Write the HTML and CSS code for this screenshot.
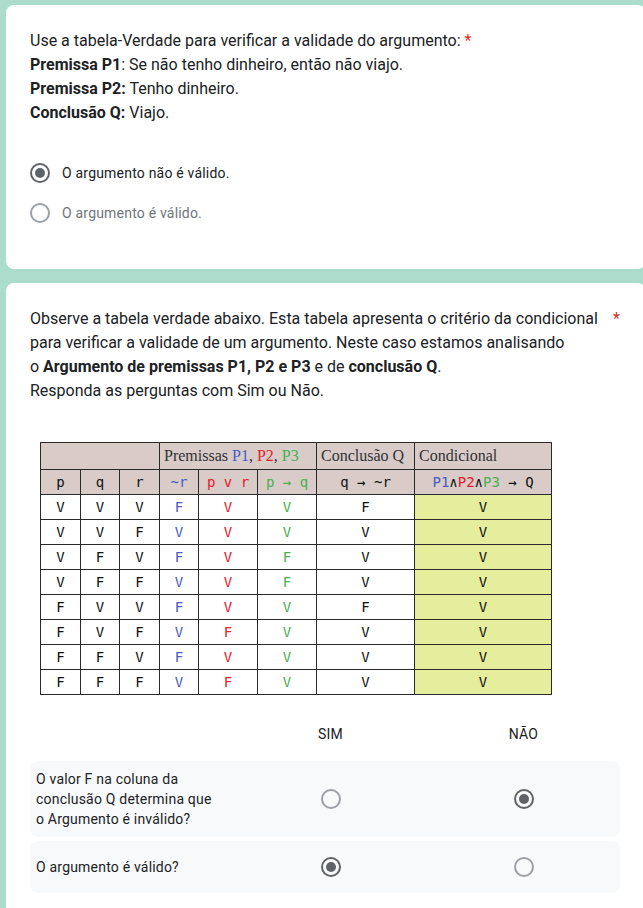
FILE: index.html
```html
<!DOCTYPE html>
<html lang="pt">
<head>
<meta charset="utf-8">
<title>Formulário</title>
<link rel="stylesheet" href="styles.css">
</head>
<body>
<main class="page">
  <section class="card card-first">
    <div class="q-title">Use a tabela-Verdade para verificar a validade do argumento: <span class="req">*</span><br><b>Premissa P1</b>: Se não tenho dinheiro, então não viajo.<br><b>Premissa P2:</b> Tenho dinheiro.<br><b>Conclusão Q:</b> Viajo.</div>
    <div class="options">
      <div class="option"><span class="radio on"></span><span class="opt-label">O argumento não é válido.</span></div>
      <div class="option muted"><span class="radio"></span><span class="opt-label">O argumento é válido.</span></div>
    </div>
  </section>

  <section class="card">
    <div class="q-head">
      <div class="q-title">Observe a tabela verdade abaixo. Esta tabela apresenta o critério da condicional<br>para verificar a validade de um argumento. Neste caso estamos analisando<br>o <b>Argumento de premissas P1, P2 e P3</b> e de <b>conclusão Q</b>.<br>Responda as perguntas com Sim ou Não.</div>
      <span class="req">*</span>
    </div>

    <table class="tt">
      <colgroup>
        <col class="w40"><col class="w39"><col class="w40"><col class="w39"><col class="w59"><col class="w59"><col class="w98"><col class="w137">
      </colgroup>
      <thead>
        <tr class="h1">
          <th colspan="3"></th>
          <th colspan="3" class="lft">Premissas <span class="cb">P1</span>, <span class="cr">P2</span>, <span class="cg">P3</span></th>
          <th class="lft">Conclusão Q</th>
          <th class="lft">Condicional</th>
        </tr>
        <tr class="h2">
          <th>p</th><th>q</th><th>r</th>
          <th class="cb">~r</th><th class="cr">p v r</th><th class="cg">p → q</th>
          <th>q → ~r</th>
          <th><span class="cb">P1</span>∧<span class="cr">P2</span>∧<span class="cg">P3</span> → Q</th>
        </tr>
      </thead>
      <tbody>
        <tr><td>V</td><td>V</td><td>V</td><td class="cb">F</td><td class="cr">V</td><td class="cg">V</td><td>F</td><td class="cond">V</td></tr>
        <tr><td>V</td><td>V</td><td>F</td><td class="cb">V</td><td class="cr">V</td><td class="cg">V</td><td>V</td><td class="cond">V</td></tr>
        <tr><td>V</td><td>F</td><td>V</td><td class="cb">F</td><td class="cr">V</td><td class="cg">F</td><td>V</td><td class="cond">V</td></tr>
        <tr><td>V</td><td>F</td><td>F</td><td class="cb">V</td><td class="cr">V</td><td class="cg">F</td><td>V</td><td class="cond">V</td></tr>
        <tr><td>F</td><td>V</td><td>V</td><td class="cb">F</td><td class="cr">V</td><td class="cg">V</td><td>F</td><td class="cond">V</td></tr>
        <tr><td>F</td><td>V</td><td>F</td><td class="cb">V</td><td class="cr">F</td><td class="cg">V</td><td>V</td><td class="cond">V</td></tr>
        <tr><td>F</td><td>F</td><td>V</td><td class="cb">F</td><td class="cr">V</td><td class="cg">V</td><td>V</td><td class="cond">V</td></tr>
        <tr><td>F</td><td>F</td><td>F</td><td class="cb">V</td><td class="cr">F</td><td class="cg">V</td><td>V</td><td class="cond">V</td></tr>
      </tbody>
    </table>

    <div class="grid">
      <div class="grid-head"><span></span><span class="col-h">SIM</span><span class="col-h">NÃO</span></div>
      <div class="grid-row">
        <div class="row-label">O valor F na coluna da<br>conclusão Q determina que<br>o Argumento é inválido?</div>
        <div class="cell"><span class="radio"></span></div>
        <div class="cell"><span class="radio on"></span></div>
      </div>
      <div class="grid-row">
        <div class="row-label">O argumento é válido?</div>
        <div class="cell"><span class="radio on"></span></div>
        <div class="cell"><span class="radio"></span></div>
      </div>
    </div>
  </section>
</main>
</body>
</html>
```
FILE: styles.css
```css
html, body {
  margin: 0;
  padding: 0;
  overflow: hidden;
  background: #acdccb;
}
body {
  font-family: Roboto, "Liberation Sans", Arial, sans-serif;
  color: #202124;
}
.page {
  padding: 5px 0 0 6px;
  width: 640px;
}
.card {
  background: #fff;
  border-radius: 8px;
  padding: 24px 24px 24px 24px;
  margin-bottom: 14px;
}
.card-first {
  padding-bottom: 36px;
}
.q-title {
  font-size: 16px;
  line-height: 24px;
  letter-spacing: 0;
}
.q-title b {
  font-weight: 700;
}
.req {
  color: #d93025;
  font-size: 16px;
  line-height: 24px;
}
.q-head {
  display: flex;
  justify-content: space-between;
  align-items: flex-start;
  padding-right: 2px;
}
.options {
  margin-top: 28px;
}
.option {
  display: flex;
  align-items: center;
  height: 40px;
}
.opt-label {
  font-size: 14px;
  letter-spacing: 0.2px;
  margin-left: 12px;
  color: #202124;
}
.option.muted .opt-label {
  color: #70757a;
}
.radio {
  box-sizing: border-box;
  width: 20px;
  height: 20px;
  border: 2px solid #9aa0a6;
  border-radius: 50%;
  display: inline-flex;
  align-items: center;
  justify-content: center;
  flex: none;
}
.radio.on {
  border-color: #5f6368;
}
.radio.on::after {
  content: "";
  width: 10px;
  height: 10px;
  border-radius: 50%;
  background: #5f6368;
}

/* truth table */
.tt {
  margin: 39px 0 0 10px;
  border-collapse: collapse;
  table-layout: fixed;
  width: 511px;
  font-family: "DejaVu Sans Mono", "Liberation Mono", monospace;
  font-size: 14px;
  color: #111;
}
.w40 { width: 40px; }
.w39 { width: 39px; }
.w59 { width: 59px; }
.w98 { width: 98px; }
.w137 { width: 137px; }
.tt th, .tt td {
  border: 1px solid #2a2a2a;
  padding: 0;
  text-align: center;
  font-weight: 400;
}
.tt thead th {
  background: #d8cbc8;
}
.tt tr.h1 {
  height: 27px;
}
.tt tr.h1 th {
  font-family: "Liberation Serif", "Times New Roman", serif;
  font-size: 16px;
  color: #333;
}
.tt th.lft {
  text-align: left;
  padding-left: 4px;
}
.tt tr.h2, .tt tbody tr {
  height: 25px;
}
.tt td.cond {
  background: #e5ee9c;
}
.cb { color: #4a5cc4; }
.cr { color: #e3202b; }
.cg { color: #4caf50; }

/* grid question */
.grid {
  width: 590px;
}
.grid-head, .grid-row {
  display: grid;
  grid-template-columns: 204px 193px 193px;
}
.grid-head {
  margin-top: 29px;
  height: 20px;
  line-height: 20px;
  margin-bottom: 17px;
}
.col-h {
  text-align: center;
  font-size: 14px;
  letter-spacing: 0.2px;
}
.grid-row {
  background: #f8f9fa;
  border-radius: 8px;
  min-height: 52px;
  align-items: center;
  margin-bottom: 4px;
}
.row-label {
  font-size: 14px;
  line-height: 20px;
  letter-spacing: 0.2px;
  padding: 8px 6px;
}
.cell {
  display: flex;
  justify-content: center;
  align-items: center;
}
```
